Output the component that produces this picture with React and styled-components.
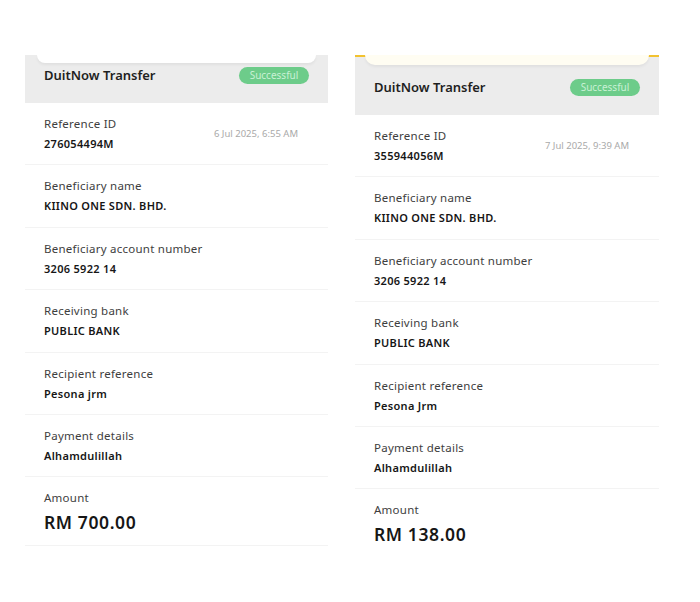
import React from 'react';
import styled, { createGlobalStyle } from 'styled-components';

const GlobalStyle = createGlobalStyle`
    html, body {
        margin: 0;
        padding: 0;
        background: #ffffff;
    }
    body {
        font-family: "Noto Sans", "Open Sans", Arial, sans-serif;
        color: #1c1c1c;
    }
`;

const Page = styled.div`
    width: 700px;
    height: 602px;
    display: flex;
    align-items: flex-start;
    gap: 27px;
    padding: 55px 0 0 25px;
    box-sizing: border-box;
`;

const Panel = styled.div`
    width: ${props => props.width}px;
    display: flex;
    flex-direction: column;
    background: #ffffff;
`;

const Header = styled.div`
    background: #ececec;
    padding: 0 19px 16px 19px;
    border-top: ${props => (props.accent ? '2px solid #f2c230' : '0')};
    display: flex;
    flex-direction: column;
`;

const CardTail = styled.div`
    height: ${props => props.tall}px;
    margin: ${props => (props.accent ? '-2px -9px 0' : '0 -7px')};
    background: ${props => (props.accent ? '#fffdf2' : '#ffffff')};
    border-radius: 0 0 14px 14px;
    box-shadow: 0 2px 3px rgba(0, 0, 0, 0.05);
`;

const TitleRow = styled.div`
    margin-top: ${props => props.offset}px;
    height: 24px;
    display: flex;
    align-items: center;
    justify-content: space-between;
`;

const Title = styled.div`
    font-size: 13px;
    font-weight: 600;
    color: #1f1f1f;
`;

const Badge = styled.div`
    width: 70px;
    height: 17px;
    border-radius: 9px;
    background: #6dcc8a;
    color: #c9f1d5;
    font-size: 10px;
    display: flex;
    align-items: center;
    justify-content: center;
`;

const Row = styled.div`
    height: ${props => (props.big ? 69 : 62.4)}px;
    box-sizing: border-box;
    padding: 13px 30px 0 19px;
    border-bottom: 1px solid ${props => (props.last ? 'transparent' : '#f3f3f3')};
    display: flex;
    justify-content: space-between;
    align-items: ${props => (props.dated ? 'center' : 'flex-start')};
`;

const Field = styled.div`
    display: flex;
    flex-direction: column;
    margin-top: ${props => (props.dated ? '-13px' : '0')};
`;

const Label = styled.div`
    font-size: 11.5px;
    line-height: 15px;
    letter-spacing: 0.25px;
    color: #3e3e3e;
`;

const Value = styled.div`
    margin-top: ${props => (props.big ? 6 : 5)}px;
    font-size: ${props => (props.big ? 17.5 : 11)}px;
    line-height: ${props => (props.big ? 22 : 15)}px;
    letter-spacing: ${props => (props.big ? 0.6 : 0.3)}px;
    font-weight: 600;
    color: #161616;
`;

const DateText = styled.div`
    font-size: 9.5px;
    color: #a9a9a9;
    margin-top: -13px;
`;

const receipts = [
    {
        width: 303,
        accent: false,
        tail: 8,
        offset: 0,
        date: '6 Jul 2025, 6:55 AM',
        ref: '276054494M',
        recipient: 'Pesona jrm',
        amount: 'RM 700.00',
        lastBorder: true,
    },
    {
        width: 304,
        accent: true,
        tail: 10,
        offset: 10,
        date: '7 Jul 2025, 9:39 AM',
        ref: '355944056M',
        recipient: 'Pesona Jrm',
        amount: 'RM 138.00',
        lastBorder: false,
    },
];

const Receipt = ({ data }) => {
    const rows = [
        ['Beneficiary name', 'KIINO ONE SDN. BHD.'],
        ['Beneficiary account number', '3206 5922 14'],
        ['Receiving bank', 'PUBLIC BANK'],
        ['Recipient reference', data.recipient],
        ['Payment details', 'Alhamdulillah'],
    ];

    return (
        <Panel width={data.width}>
            <Header accent={data.accent}>
                <CardTail tall={data.tail} accent={data.accent} />
                <TitleRow offset={data.offset}>
                    <Title>DuitNow Transfer</Title>
                    <Badge>Successful</Badge>
                </TitleRow>
            </Header>
            <Row dated>
                <Field dated>
                    <Label>Reference ID</Label>
                    <Value>{data.ref}</Value>
                </Field>
                <DateText>{data.date}</DateText>
            </Row>
            {rows.map(([label, value]) => (
                <Row key={label}>
                    <Field>
                        <Label>{label}</Label>
                        <Value>{value}</Value>
                    </Field>
                </Row>
            ))}
            <Row big last={!data.lastBorder}>
                <Field>
                    <Label>Amount</Label>
                    <Value big>{data.amount}</Value>
                </Field>
            </Row>
        </Panel>
    );
};

const App = () => (
    <>
        <GlobalStyle />
        <Page>
            {receipts.map(r => (
                <Receipt key={r.ref} data={r} />
            ))}
        </Page>
    </>
);

export default App;
